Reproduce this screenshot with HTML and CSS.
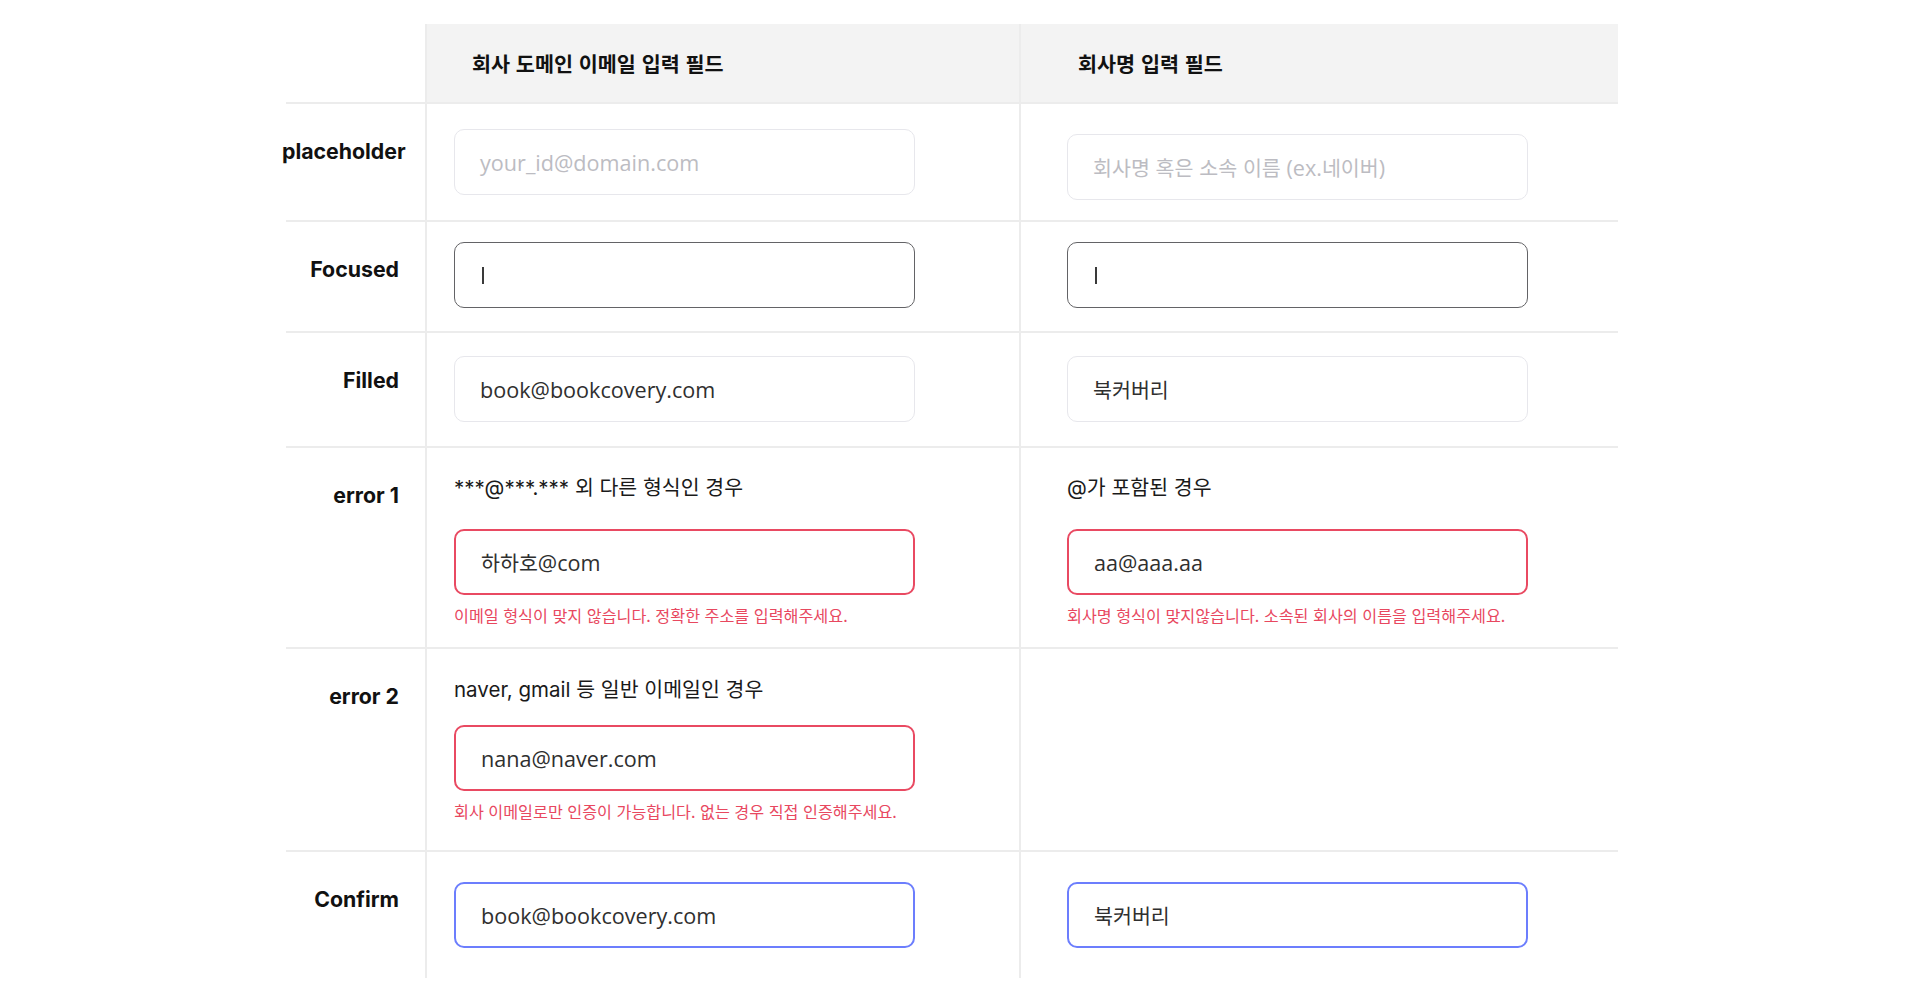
FILE: index.html
```html
<!DOCTYPE html>
<html lang="ko">
<head>
<meta charset="utf-8">
<title>입력 필드 상태</title>
<link rel="stylesheet" href="styles.css">
</head>
<body>
<div class="sheet">
  <div class="table">
    <!-- header -->
    <div class="cell label head-label"></div>
    <div class="cell c1 head">회사 도메인 이메일 입력 필드</div>
    <div class="cell c2 head">회사명 입력 필드</div>

    <!-- placeholder -->
    <div class="cell label"><div class="label-text">placeholder</div></div>
    <div class="cell c1 r-ph"><div class="field placeholder">your_id@domain.com</div></div>
    <div class="cell c2 r-ph shift"><div class="field placeholder"><span class="ko">회사명 혹은 소속 이름</span>&nbsp;(ex.<span class="ko">네이버</span>)</div></div>

    <!-- focused -->
    <div class="cell label"><div class="label-text">Focused</div></div>
    <div class="cell c1 r-focus"><div class="field focused"><span class="caret"></span></div></div>
    <div class="cell c2 r-focus"><div class="field focused"><span class="caret"></span></div></div>

    <!-- filled -->
    <div class="cell label"><div class="label-text">Filled</div></div>
    <div class="cell c1 r-filled"><div class="field">book@bookcovery.com</div></div>
    <div class="cell c2 r-filled"><div class="field"><span class="ko">북커버리</span></div></div>

    <!-- error 1 -->
    <div class="cell label"><div class="label-text">error 1</div></div>
    <div class="cell c1 r-err1">
      <p class="caption">***@***.*** 외 다른 형식인 경우</p>
      <div class="field error"><span class="ko">하하호</span>@com</div>
      <p class="msg">이메일 형식이 맞지 않습니다. 정확한 주소를 입력해주세요.</p>
    </div>
    <div class="cell c2 r-err1">
      <p class="caption">@가 포함된 경우</p>
      <div class="field error">aa@aaa.aa</div>
      <p class="msg">회사명 형식이 맞지않습니다. 소속된 회사의 이름을 입력해주세요.</p>
    </div>

    <!-- error 2 -->
    <div class="cell label"><div class="label-text">error 2</div></div>
    <div class="cell c1 r-err2">
      <p class="caption">naver, gmail 등 일반 이메일인 경우</p>
      <div class="field error">nana@naver.com</div>
      <p class="msg">회사 이메일로만 인증이 가능합니다. 없는 경우 직접 인증해주세요.</p>
    </div>
    <div class="cell c2 r-err2"></div>

    <!-- confirm -->
    <div class="cell label last"><div class="label-text">Confirm</div></div>
    <div class="cell c1 r-confirm last"><div class="field confirm">book@bookcovery.com</div></div>
    <div class="cell c2 r-confirm last"><div class="field confirm"><span class="ko">북커버리</span></div></div>
  </div>
</div>
</body>
</html>
```

FILE: styles.css
```css
* { box-sizing: border-box; }

html, body {
  margin: 0;
  padding: 0;
  background: #ffffff;
}

body {
  font-family: "Inter", "Noto Sans CJK KR", sans-serif;
  color: #111111;
}

.sheet {
  margin: 24px 0 0 286px;
  width: 1332px;
}

.table {
  display: grid;
  grid-template-columns: 139px 594px 599px;
}

.cell {
  border-bottom: 2px solid #ececec;
}

.cell.last {
  border-bottom: none;
}

.c1 {
  border-left: 2px solid #ececec;
  padding-left: 27px;
}

.c2 {
  border-left: 2px solid #ececec;
  padding-left: 46px;
}

/* header */
.head {
  height: 80px;
  background: #f3f3f3;
  display: flex;
  align-items: center;
  font-family: "Noto Sans CJK KR", sans-serif;
  font-weight: 700;
  font-size: 20.7px;
  color: #111111;
}

.head.c1 { padding-left: 45px; }
.head.c2 { padding-left: 57px; }

/* labels */
.label {
  padding: 35px 26px 0 0;
  text-align: right;
}

.label-text {
  margin-left: -4px;
  font-family: "Inter", sans-serif;
  font-weight: 700;
  font-size: 21.3px;
  line-height: 25px;
  color: #111111;
  white-space: nowrap;
}

.head-label {
  padding: 0;
}

/* rows */
.r-ph { padding-top: 25px; padding-bottom: 25px; }
.r-ph.shift { padding-top: 30px; padding-bottom: 0; }
.r-focus { padding-top: 20px; padding-bottom: 23px; }
.r-filled { padding-top: 23px; padding-bottom: 24px; }
.r-err1 { padding-top: 26px; padding-bottom: 22px; }
.r-err2 { padding-top: 27px; padding-bottom: 29px; }
.r-confirm { padding-top: 30px; padding-bottom: 30px; }

.caption {
  margin: 0;
  font-family: "Inter", "Noto Sans CJK KR", sans-serif;
  font-size: 20.5px;
  line-height: 28px;
  color: #1a1a1a;
  white-space: nowrap;
}

.r-err1 .caption { margin-bottom: 27px; }
.r-err2 .caption { margin-bottom: 21px; }

.msg {
  margin: 10px 0 0 0;
  font-family: "Noto Sans CJK KR", sans-serif;
  font-size: 16.2px;
  line-height: 20px;
  color: #e8485f;
  white-space: nowrap;
}

/* fields */
.field {
  width: 461px;
  height: 66px;
  border: 1.5px solid #e7e7ec;
  border-radius: 10px;
  padding-left: 25px;
  display: flex;
  align-items: center;
  font-family: "Open Sans", "Noto Sans CJK KR", sans-serif;
  font-size: 21.6px;
  color: #2f2f2f;
  white-space: nowrap;
  background: #ffffff;
}

.field .ko {
  font-family: "Noto Sans CJK KR", sans-serif;
  font-size: 20.6px;
}

.field.placeholder {
  color: #bcbcc2;
}

.field.focused {
  border: 1.5px solid #636366;
}

.field.error {
  border: 2px solid #e94a62;
}

.field.confirm {
  border: 2px solid #6c7efd;
}

.caret {
  display: block;
  width: 1.5px;
  height: 17px;
  margin-left: 2px;
  background: #3a3a3a;
}
```
